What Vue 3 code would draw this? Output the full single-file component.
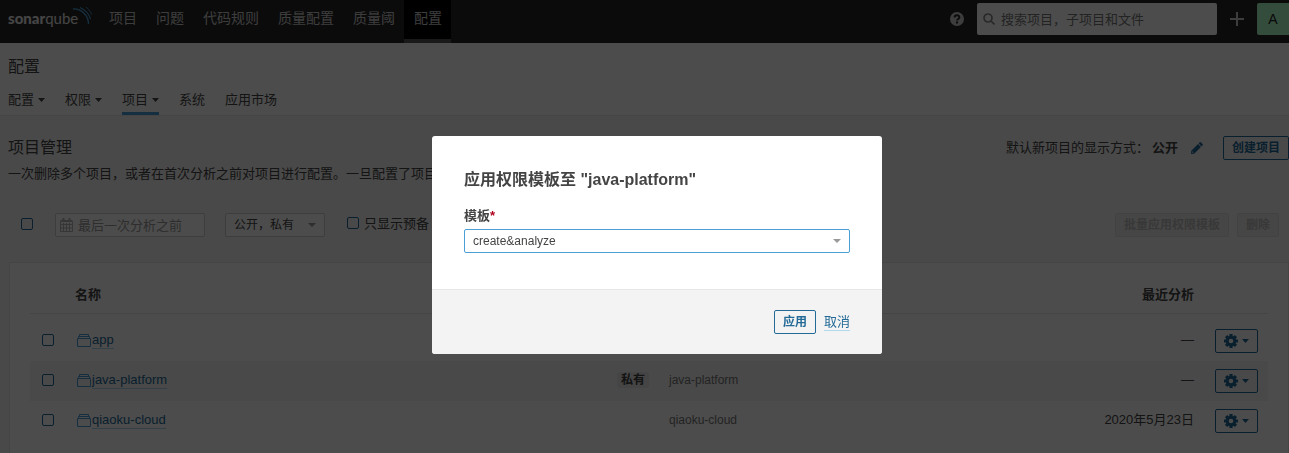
<script setup>
import { ref } from 'vue'

const mainNav = ['项目', '问题', '代码规则', '质量配置', '质量阈', '配置']
const tabs = [
  { label: '配置', menu: true },
  { label: '权限', menu: true },
  { label: '项目', menu: true, active: true },
  { label: '系统' },
  { label: '应用市场' },
]
const projects = [
  { name: 'app', hidden: false, key: 'app', date: '—' },
  { name: 'java-platform', hidden: true, key: 'java-platform', date: '—' },
  { name: 'qiaoku-cloud', hidden: false, key: 'qiaoku-cloud', date: '2020年5月23日' },
]
const template = ref('create&analyze')
</script>

<template>
  <div class="page">
    <header class="topbar">
      <a class="logo" href="#" aria-label="sonarqube">
        <span class="logo-bold">sonar</span><span class="logo-light">qube</span>
        <svg class="waves" width="20" height="20" viewBox="0 0 20 20" fill="none" stroke="#4b9fd5">
          <path d="M0 3C8 2.500 15.500 9 15.500 18" stroke-width="1.300" />
          <path d="M7 1.500C12.500 4 16 8 17.500 13" stroke-width="1.100" />
          <path d="M13 1C15.500 3 17.500 5.500 18.700 8.500" stroke-width="0.900" />
        </svg>
      </a>
      <nav class="main-nav">
        <a v-for="(item, i) in mainNav" :key="item" href="#" :class="{ active: i === 5 }">{{ item }}</a>
      </nav>
      <div class="tools">
        <button class="plain" aria-label="Help">
          <svg width="14" height="14" viewBox="0 0 14 14">
            <circle cx="7" cy="7" r="7" fill="#ccc" />
            <path d="M4.600 5.400C4.600 2.600 9.400 2.600 9.400 5.400C9.400 7 7 6.900 7 8.600" fill="none" stroke="#262626" stroke-width="1.900" />
            <path d="M6 9.600h2v1.900h-2z" fill="#262626" />
          </svg>
        </button>
        <label class="search">
          <svg width="12" height="12" viewBox="0 0 12 12" fill="none" stroke="#888" stroke-width="1.700">
            <circle cx="5" cy="5" r="4" /><path d="M8 8l3.500 3.500" />
          </svg>
          <input type="search" aria-label="搜索" placeholder="搜索项目，子项目和文件" />
        </label>
        <button class="plain plus" aria-label="+">
          <svg width="14" height="14" viewBox="0 0 14 14"><path d="M6 0h2v6h6v2H8v6H6V8H0V6h6z" fill="#ccc" /></svg>
        </button>
        <button class="avatar">A</button>
      </div>
    </header>

    <section class="context">
      <h1>配置</h1>
      <nav class="tabs">
        <a v-for="tab in tabs" :key="tab.label" href="#" :class="{ active: tab.active }">
          {{ tab.label }}
          <svg v-if="tab.menu" width="7" height="4" viewBox="0 0 7 4"><path d="M0 0h7L3.500 4z" fill="#444" /></svg>
        </a>
      </nav>
    </section>

    <main class="content">
      <div class="heading">
        <h2>项目管理</h2>
        <div class="visibility">
          <span>默认新项目的显示方式：</span>
          <strong>公开</strong>
          <button class="plain pencil" aria-label="编辑">
            <svg width="12" height="12" viewBox="0 0 12 12" fill="#236a97">
              <path d="M8.800 0.300q0.500-0.500 1 0l1.900 1.900q0.500 0.500 0 1L10.500 4.400 7.600 1.500z" />
              <path fill-rule="evenodd" d="M7 2.100L9.900 5 3.200 11.700 0 12l0.300-3.200zM1.500 9.200L1.200 10.800 2.800 10.500z" />
            </svg>
          </button>
          <button class="btn create">创建项目</button>
        </div>
      </div>
      <p class="description">一次删除多个项目，或者在首次分析之前对项目进行配置。一旦配置了项目</p>

      <div class="filters">
        <input class="check" type="checkbox" aria-label="全选" />
        <label class="date">
          <svg width="13" height="14" viewBox="0 0 13 14" fill="none" stroke="#b4b4b4">
            <path d="M0.500 3.500h12v10h-12zM0.500 6.500h12M0.500 10h12M3.500 5v8.500M6.500 5v8.500M9.500 5v8.500M0.500 2.500h12" />
            <path d="M3.500 0v3.500M9.500 0v3.500" stroke-width="2" />
          </svg>
          <input type="text" aria-label="最后一次分析之前" placeholder="最后一次分析之前" />
        </label>
        <span class="select-wrap scope">
          <select class="select" aria-label="可见性"><option>公开，私有</option></select>
          <svg class="arrow" width="8" height="4" viewBox="0 0 8 4"><path d="M0 0h8L4 4z" fill="#999" /></svg>
        </span>
        <label class="provisioned"><input class="check" type="checkbox" />只显示预备</label>
        <div class="bulk">
          <button class="btn" disabled>批量应用权限模板</button>
          <button class="btn" disabled>删除</button>
        </div>
      </div>

      <div class="panel">
        <table>
          <thead>
            <tr>
              <th class="c-check"></th>
              <th class="c-name">名称</th>
              <th class="c-badge"></th>
              <th class="c-key"></th>
              <th class="c-date">最近分析</th>
              <th class="c-action"></th>
            </tr>
          </thead>
          <tbody>
            <tr class="spacer" aria-hidden="true"><td colspan="6"></td></tr>
            <tr v-for="(p, i) in projects" :key="p.name" :class="{ striped: i === 1 }">
              <td class="c-check"><input class="check" type="checkbox" :aria-label="p.name" /></td>
              <td class="c-name">
                <a class="project" href="#">
                  <svg width="14" height="13" viewBox="0 0 14 13" fill="none" stroke="#4b9fd5">
                    <path d="M0.500 4.500h13v8h-13zM1.500 4.500v-2h11v2M2.500 2.500v-2h9v2" />
                  </svg>
                  <span>{{ p.name }}</span>
                </a>
              </td>
              <td class="c-badge"><span v-if="p.hidden" class="badge">私有</span></td>
              <td class="c-key">{{ p.key }}</td>
              <td class="c-date">{{ p.date }}</td>
              <td class="c-action">
                <button class="btn gear" aria-label="操作">
                  <svg width="14" height="14" viewBox="-7 -7 14 14" fill="#236a97">
                    <g v-for="n in 4" :key="n" :transform="`rotate(${n * 45})`"><path d="M-1.600 -7h3.200v4h-3.200zM-1.600 3h3.200v4h-3.200z" /></g>
                    <circle r="3.800" fill="none" stroke="#236a97" stroke-width="3" />
                  </svg>
                  <svg width="7" height="4" viewBox="0 0 7 4"><path d="M0 0h7L3.500 4z" fill="#236a97" /></svg>
                </button>
              </td>
            </tr>
          </tbody>
        </table>
      </div>
    </main>

    <div class="overlay">
      <form class="modal" role="dialog" aria-modal="true" aria-labelledby="modal-title" @submit.prevent>
        <div class="modal-body">
          <h2 id="modal-title">应用权限模板至 "java-platform"</h2>
          <label class="field-label" for="template">模板<em>*</em></label>
          <span class="select-wrap">
            <select id="template" v-model="template" class="select focused"><option>create&amp;analyze</option></select>
            <svg class="arrow" width="8" height="4" viewBox="0 0 8 4"><path d="M0 0h8L4 4z" fill="#999" /></svg>
          </span>
        </div>
        <footer class="modal-foot">
          <button class="btn" type="submit">应用</button>
          <a class="cancel" href="#">取消</a>
        </footer>
      </form>
    </div>
  </div>
</template>

<style>
html, body { height: 100%; overflow: hidden; }
body { margin: 0; }
</style>

<style scoped>
* { box-sizing: border-box; }
.page {
  height: 100vh;
  overflow: hidden;
  background: #f3f3f3;
  color: #444;
  font: 13px/20px "Liberation Sans", "Noto Sans CJK SC", sans-serif;
}
a { color: inherit; text-decoration: none; }
button, input, select { font-family: inherit; margin: 0; }
h1, h2, p { margin: 0; }
h1, h2 { font-size: 16px; line-height: 24px; font-weight: 400; }

.topbar { display: flex; height: 43px; background: #262626; }
.logo { position: relative; display: flex; width: 91px; padding: 7px 0 0 8px; color: #e6e6e6; font-family: Lato, sans-serif; font-size: 15px; line-height: 22px; }
.logo-bold { font-weight: 900; }
.logo-light { font-weight: 400; }
.waves { position: absolute; left: 73px; top: 6px; }
.main-nav { display: flex; margin-left: 8px; }
.main-nav a { padding: 8px 9px 11px 10px; border-bottom: 4px solid transparent; color: #ccc; font-size: 14px; line-height: 20px; }
.main-nav a.active { background: #000; border-bottom-color: #555; }
.tools { display: flex; align-items: flex-start; margin-left: auto; padding-top: 3px; }
.plain { display: flex; align-items: center; height: 32px; padding: 0; border: 0; background: none; }
.search { display: flex; align-items: center; gap: 6px; width: 240px; height: 32px; margin: 0 13px; padding: 0 6px; border-radius: 2px; background: #fff; }
.search input, .date input { flex: 1; min-width: 0; padding: 0; border: 0; outline: 0; background: none; font-size: 13px; }
.search input::placeholder { color: #777; opacity: 1; }
.avatar { width: 32px; height: 32px; margin-left: 13px; padding: 0; border: 0; border-radius: 2px 0 0 2px; background: #afffca; color: #222; font-size: 14px; }

.context { padding: 12px 8px 0; background: #fff; border-bottom: 1px solid #e6e6e6; }
.tabs { display: flex; gap: 20px; margin-top: 11px; }
.tabs a { display: flex; align-items: center; gap: 4px; height: 25px; padding-bottom: 2px; border-bottom: 3px solid transparent; }
.tabs a.active { border-color: #4b9fd5; }

.content { padding: 20px 0 0 8px; }
.heading { display: flex; justify-content: space-between; align-items: center; height: 24px; }
.visibility { display: flex; align-items: center; }
.visibility strong { margin-left: 3px; }
.pencil { height: 24px; margin: 0 20px 0 13px; }
.description { margin-top: 4px; white-space: nowrap; }
.btn { height: 24px; padding: 0 8px; border: 1px solid #236a97; border-radius: 2px; background: none; color: #236a97; font-size: 12px; font-weight: 700; line-height: 22px; white-space: nowrap; }
.btn:disabled { border-color: #ddd; background: #ebebeb; color: #bbb; }

.check { appearance: none; flex: none; width: 12px; height: 12px; border: 1px solid #236a97; border-radius: 2px; }
.filters { display: flex; align-items: center; margin: 29px 10px 0 13px; height: 24px; }
.filters .check { margin-bottom: 2px; }
.date { display: flex; align-items: center; gap: 5px; width: 150px; height: 24px; margin: 0 20px 0 22px; padding: 0 5px 0 4px; border: 1px solid #cdcdcd; border-radius: 2px; background: #fff; }
.date input::placeholder { color: #999; opacity: 1; }
.select-wrap { position: relative; display: block; }
.scope { width: 100px; }
.select { appearance: none; display: block; width: 100%; height: 24px; padding: 0 24px 0 8px; border: 1px solid #cdcdcd; border-radius: 2px; outline: 0; background: #fff; color: #444; font-size: 12px; }
.select.focused { border-color: #4b9fd5; }
.arrow { position: absolute; right: 9px; top: 10px; pointer-events: none; }
.provisioned { display: flex; align-items: center; gap: 5px; margin-left: 22px; padding-bottom: 2px; }
.bulk { display: flex; gap: 8px; margin-left: auto; }

.panel { margin: 25px 0 0 1px; min-height: 220px; padding: 11px 20px; border: 1px solid #e6e6e6; background: #fff; }
table { width: 100%; border-collapse: collapse; table-layout: fixed; }
th, td { height: 40px; padding: 0; text-align: left; }
td { padding-bottom: 2px; }
th { height: 39px; padding-top: 4px; border-bottom: 1px solid #e6e6e6; }
.spacer td { height: 8px; padding: 0; }
.striped { background: #f5f5f5; }
.c-check { width: 45px; }
td.c-check { padding-left: 12px; }
.c-check .check { display: block; }
.c-badge { width: 52px; }
.c-key { width: 300px; color: #777; font-size: 12px; }
th.c-date, td.c-date { width: 225px; text-align: right; }
.c-action { width: 74px; }
td.c-action { padding: 0 10px 0 21px; }
.project { display: flex; align-items: center; color: #236a97; }
.project svg { margin-left: 2px; }
.project span { line-height: 16px; margin-left: 1px; border-bottom: 1px solid #b0d8ee; }
.badge { display: inline-block; padding: 0 4px; border-radius: 3px; background: #e6e6e6; font-size: 12px; line-height: 16px; font-weight: 700; }
.gear { display: flex; align-items: center; gap: 4px; }

.overlay { position: fixed; inset: 0; display: flex; justify-content: center; align-items: flex-start; padding: 136px 0 0 25px; background: rgba(0, 0, 0, 0.7); }
.modal { width: 450px; overflow: hidden; border-radius: 3px; background: #fff; }
.modal-body { padding: 32px 32px 36px; }
.modal h2 { font-weight: 700; }
.field-label { display: block; margin: 14px 0 3px; font-weight: 700; }
.field-label em { color: #b0001c; font-style: normal; }
.modal-foot { display: flex; justify-content: flex-end; align-items: center; gap: 8px; padding: 20px 32px; border-top: 1px solid #e6e6e6; background: #f3f3f3; }
.cancel { color: #236a97; line-height: 16px; border-bottom: 1px solid #b0d8ee; }
</style>
